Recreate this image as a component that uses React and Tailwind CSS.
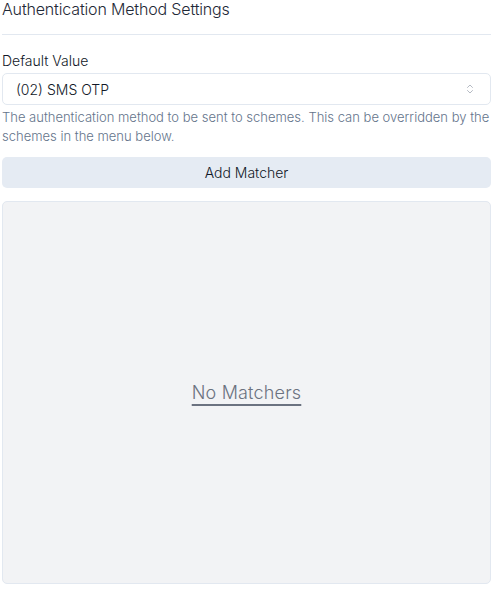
import { ChevronsUpDown } from 'lucide-react'

export default function App() {
  return (
    <div
      className="min-h-[593px] bg-white pl-[2px] pr-[10px] text-[#111827]"
      style={{ fontFamily: 'Inter, "Noto Sans", sans-serif' }}
    >
      <div>
        <h2 className="text-[16px] font-light leading-[19px] tracking-[-0.01em] text-[#1f2937]">
          Authentication Method Settings
        </h2>
        <div className="mt-[15px] h-px bg-[#e2e8f0]" />
      </div>

      <div className="mt-[16px]">
        <label className="block text-[14px] font-light leading-[20px] text-[#111827]">Default Value</label>
        <div className="mt-[2px] flex h-[32px] items-center justify-between rounded-[5px] border border-[#e2e8f0] bg-white pl-[13px] pr-[14px]">
          <span className="text-[14px] font-light text-[#111827]">(02) SMS OTP</span>
          <ChevronsUpDown size={12} strokeWidth={1.5} className="text-[#9ca3af]" />
        </div>
        <p className="mt-[3px] text-[13px] font-light leading-[19px] text-[#64748b]">
          The authentication method to be sent to schemes. This can be overridden by the schemes in the menu below.
        </p>
      </div>

      <button
        type="button"
        className="mt-[11px] flex h-[31px] w-full items-center justify-center rounded-[5px] bg-[#e5ebf3] text-[14px] font-light text-[#111827]"
      >
        Add Matcher
      </button>

      <div className="mt-[13px] flex h-[383px] items-center justify-center rounded-[5px] border border-[#e2e8f0] bg-[#f2f3f5]">
        <span className="text-[18px] font-light tracking-[0.01em] text-[#6b7280] underline decoration-2 underline-offset-[5px]">
          No Matchers
        </span>
      </div>
    </div>
  )
}
